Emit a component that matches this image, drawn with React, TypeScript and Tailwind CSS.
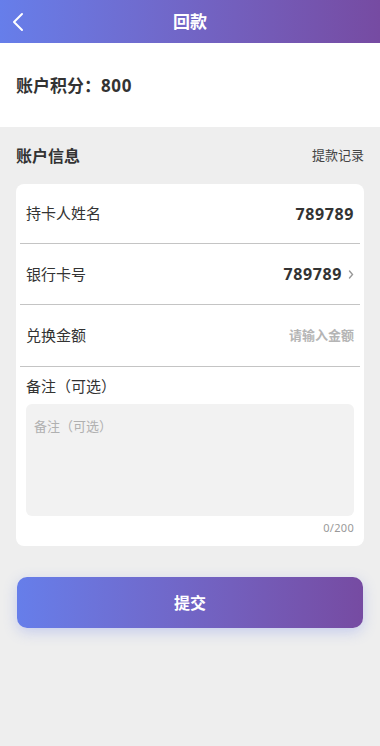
export default function App() {
  return (
    <div
      className="min-h-[746px] w-[380px] bg-[#eeeeee] text-[#333333]"
      style={{ fontFamily: '"Noto Sans", "Noto Sans CJK SC", sans-serif' }}
    >
      <header className="relative flex h-[43px] items-center justify-center bg-gradient-to-r from-[#667eea] to-[#764ba2]">
        <svg
          className="absolute left-[11px] top-[12px]"
          width="14"
          height="20"
          viewBox="0 0 14 20"
          fill="none"
          stroke="white"
          strokeWidth="2"
          strokeLinecap="round"
          strokeLinejoin="round"
        >
          <path d="M11 2 L3 10 L11 18" />
        </svg>
        <h1 className="text-[17px] font-bold text-white">回款</h1>
      </header>

      <section className="flex h-[84px] items-center bg-white px-4">
        <p className="pt-[1px] text-[17px] font-bold text-[#333]">
          账户积分：<span className="tracking-[0.6px]">800</span>
        </p>
      </section>

      <div className="flex items-center justify-between px-4 pt-[17px]">
        <h2 className="text-[16px] font-bold">账户信息</h2>
        <span className="text-[13px] text-[#444]">提款记录</span>
      </div>

      <div className="mx-4 mt-[16px] rounded-lg bg-white px-1 pb-[10px]">
        <div className="flex h-[60px] items-center justify-between border-b border-[#c4c4c4] pl-[6px] pr-[6px]">
          <span className="text-[15px] text-[#333]">持卡人姓名</span>
          <span className="text-[16px] font-bold tracking-[0.6px]">789789</span>
        </div>
        <div className="flex h-[61px] items-center justify-between border-b border-[#c4c4c4] pl-[6px] pr-[6px]">
          <span className="text-[15px] text-[#333]">银行卡号</span>
          <span className="flex items-center gap-[6px]">
            <span className="text-[16px] font-bold tracking-[0.6px]">789789</span>
            <svg width="6" height="9" viewBox="0 0 6 9" fill="none" stroke="#999" strokeWidth="1.4" strokeLinecap="round">
              <path d="M1.5 1 L4.5 4.5 L1.5 8" />
            </svg>
          </span>
        </div>
        <div className="flex h-[62px] items-center justify-between border-b border-[#c4c4c4] pl-[6px] pr-[6px]">
          <span className="text-[15px] text-[#333]">兑换金额</span>
          <span className="text-[13px] font-bold text-[#b5b5b5]">请输入金额</span>
        </div>
        <div className="px-[6px] pt-[8px]">
          <p className="text-[15px] text-[#333]">备注（可选）</p>
          <div className="mt-[6px] h-[112px] rounded-md bg-[#f2f2f2] px-2 pt-[9px]">
            <span className="text-[13px] text-[#b0b0b0]">备注（可选）</span>
          </div>
          <p className="mt-[4px] text-right text-[11px] tracking-[0.3px] text-[#999]">0/200</p>
        </div>
      </div>

      <div className="mx-[17px] mt-[31px]">
        <button className="flex h-[51px] w-full items-center justify-center rounded-[10px] bg-gradient-to-r from-[#667eea] to-[#764ba2] text-[16px] font-bold text-white shadow-[0_4px_14px_rgba(102,126,234,0.3)]">
          提交
        </button>
      </div>
    </div>
  );
}
